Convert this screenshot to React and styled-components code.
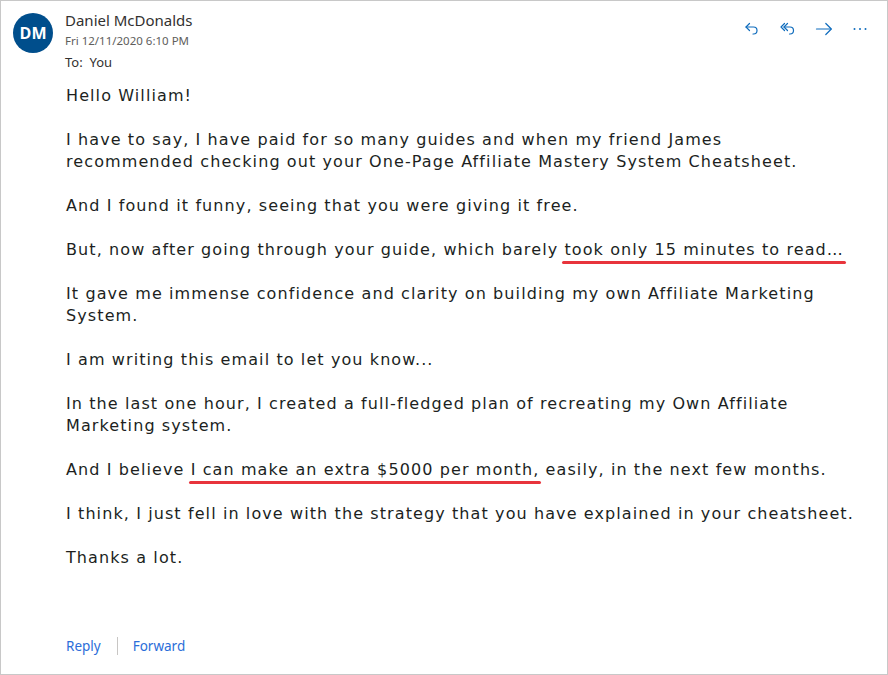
import React from "react";
import styled, { createGlobalStyle } from "styled-components";

const Global = createGlobalStyle`
  html, body { margin: 0; padding: 0; background: #fff; }
  * { box-sizing: border-box; }
`;

const Frame = styled.div`
  width: 888px;
  height: 675px;
  border: 1px solid #c8c8c8;
  display: flex;
  flex-direction: column;
  background: #fff;
`;

const Header = styled.div`
  display: flex;
  align-items: flex-start;
  padding: 12px 17px 0 12px;
  gap: 12px;
`;

const Avatar = styled.div`
  width: 40px;
  height: 40px;
  border-radius: 50%;
  background: #004e8c;
  color: #fff;
  display: flex;
  align-items: center;
  justify-content: center;
  font-family: "Open Sans", "Noto Sans", sans-serif;
  font-weight: 700;
  font-size: 16px;
  flex-shrink: 0;
`;

const Meta = styled.div`
  flex: 1;
  display: flex;
  flex-direction: column;
  font-family: "Noto Sans", "Open Sans", sans-serif;
`;

const Name = styled.div`
  font-size: 15px;
  color: #323130;
  line-height: 20px;
  margin-top: -3px;
`;

const DateLine = styled.div`
  font-size: 11.5px;
  color: #605e5c;
  line-height: 16px;
  margin-top: 3px;
`;

const ToLine = styled.div`
  font-size: 13px;
  color: #323130;
  line-height: 18px;
  margin-top: 4px;
  white-space: pre;
`;

const Actions = styled.div`
  display: flex;
  gap: 15px;
  padding-top: 6px;
`;

const IconBtn = styled.div`
  width: 21px;
  height: 20px;
  display: flex;
  align-items: center;
  justify-content: center;
  color: #0f6cbd;
`;

const Body = styled.div`
  padding: 14px 10px 0 65px;
  font-family: "DejaVu Sans", sans-serif;
  font-size: 16px;
  letter-spacing: 1.1px;
  line-height: 22px;
  color: #201f1e;
  flex: 1;
`;

const Para = styled.p`
  margin: 0 0 22px 0;
`;

const Mark = styled.span`
  position: relative;
  &::after {
    content: "";
    position: absolute;
    left: -2px;
    right: -2px;
    bottom: -5px;
    height: 3px;
    border-radius: 2px;
    background: #e8343c;
  }
`;

const Footer = styled.div`
  display: flex;
  align-items: center;
  padding: 0 0 18px 65px;
  font-family: "Noto Sans", "Open Sans", sans-serif;
  font-size: 13.5px;
`;

const FootLink = styled.span`
  color: #2b6ed9;
  line-height: 20px;
`;

const Sep = styled.div`
  width: 1px;
  height: 18px;
  background: #c8c6c4;
  margin: 0 15px 0 16px;
`;

const ReplyIcon = () => (
  <svg width="18" height="18" viewBox="0 0 18 18" fill="none" stroke="currentColor" strokeWidth="1.2" strokeLinecap="round" strokeLinejoin="round">
    <path d="M6.5 3.5 L3 7 L6.5 10.5" />
    <path d="M3 7 H10.5 a3.5 3.5 0 0 1 0 7 H10" />
  </svg>
);

const ReplyAllIcon = () => (
  <svg width="18" height="18" viewBox="0 0 18 18" fill="none" stroke="currentColor" strokeWidth="1.2" strokeLinecap="round" strokeLinejoin="round">
    <path d="M5.5 3.5 L2 7 L5.5 10.5" />
    <path d="M8.5 3.5 L5 7 L8.5 10.5" />
    <path d="M5 7 H11 a3.5 3.5 0 0 1 0 7 H10.5" />
  </svg>
);

const ForwardIcon = () => (
  <svg width="18" height="18" viewBox="0 0 18 18" fill="none" stroke="currentColor" strokeWidth="1.2" strokeLinecap="round" strokeLinejoin="round">
    <path d="M1.5 9 H16" />
    <path d="M10.8 3.5 L16.3 9 L10.8 14.5" />
  </svg>
);

const MoreIcon = () => (
  <svg width="18" height="18" viewBox="0 0 18 18" fill="currentColor">
    <circle cx="3.5" cy="9" r="1" />
    <circle cx="9" cy="9" r="1" />
    <circle cx="14.5" cy="9" r="1" />
  </svg>
);

export default function App() {
  return (
    <>
      <Global />
      <Frame>
        <Header>
          <Avatar>DM</Avatar>
          <Meta>
            <Name>Daniel McDonalds</Name>
            <DateLine>Fri 12/11/2020 6:10 PM</DateLine>
            <ToLine>{"To:  You"}</ToLine>
          </Meta>
          <Actions>
            <IconBtn><ReplyIcon /></IconBtn>
            <IconBtn><ReplyAllIcon /></IconBtn>
            <IconBtn><ForwardIcon /></IconBtn>
            <IconBtn><MoreIcon /></IconBtn>
          </Actions>
        </Header>
        <Body>
          <Para>Hello William!</Para>
          <Para>
            I have to say, I have paid for so many guides and when my friend James
            <br />
            recommended checking out your One-Page Affiliate Mastery System Cheatsheet.
          </Para>
          <Para>And I found it funny, seeing that you were giving it free.</Para>
          <Para>
            But, now after going through your guide, which barely{" "}
            <Mark>took only 15 minutes to read…</Mark>
          </Para>
          <Para>
            It gave me immense confidence and clarity on building my own Affiliate Marketing
            <br />
            System.
          </Para>
          <Para>I am writing this email to let you know...</Para>
          <Para>
            In the last one hour, I created a full-fledged plan of recreating my Own Affiliate
            <br />
            Marketing system.
          </Para>
          <Para>
            And I believe <Mark>I can make an extra $5000 per month,</Mark> easily, in the next few months.
          </Para>
          <Para>I think, I just fell in love with the strategy that you have explained in your cheatsheet.</Para>
          <Para>Thanks a lot.</Para>
        </Body>
        <Footer>
          <FootLink>Reply</FootLink>
          <Sep />
          <FootLink>Forward</FootLink>
        </Footer>
      </Frame>
    </>
  );
}
